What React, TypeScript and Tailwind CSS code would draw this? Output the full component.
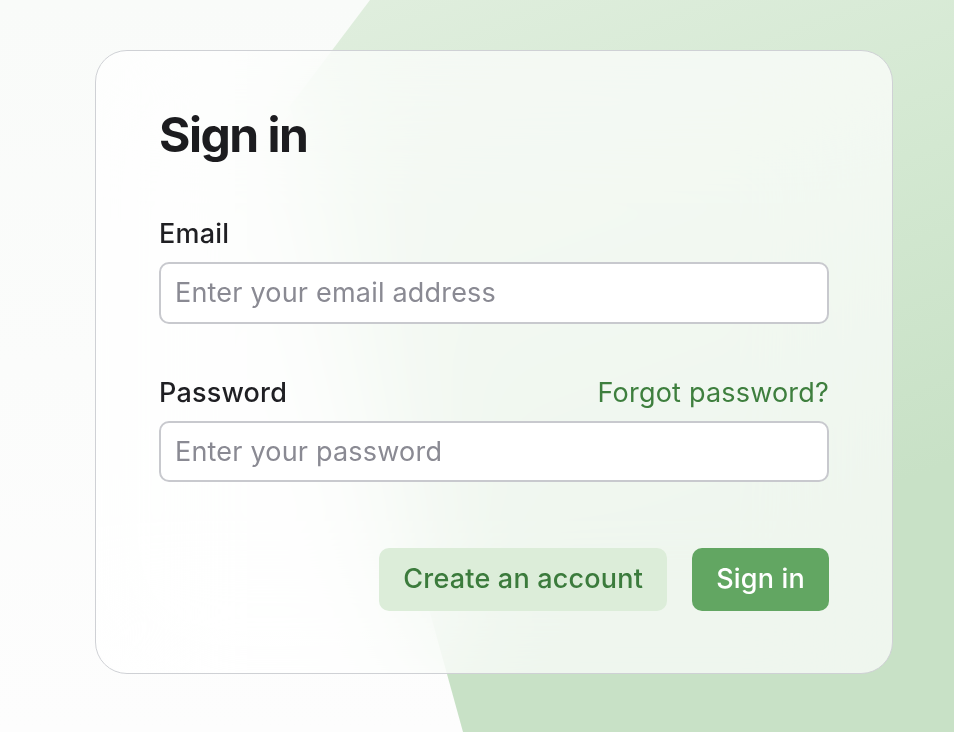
import React from 'react';

export default function App() {
  return (
    <div className="relative w-[954px] h-[732px] overflow-hidden bg-[linear-gradient(180deg,#f9fbf9,#fdfdfd)] font-['Inter',sans-serif]">
      {/* green backdrop shape */}
      <div className="absolute inset-0 bg-[linear-gradient(160deg,#e4f0e2_0%,#d3e8d1_45%,#c8e1c6_75%)] [clip-path:polygon(370px_0,100%_0,100%_100%,463px_100%,290px_106px)]" />

      <div className="relative pt-[50px] pl-[95px]">
        <div className="w-[798px] h-[624px] rounded-[32px] border border-[#cfd1d5] bg-white/70 backdrop-blur-3xl pt-[60px] pb-[62px] px-[63px] flex flex-col">
          <h1 className="text-[48px] leading-[48px] font-bold tracking-[-1.5px] text-[#1c1c1f]">Sign in</h1>

          <label className="mt-[59px] text-[27px] leading-[32px] font-medium tracking-[0.2px] text-[#1f1f23]">Email</label>
          <input
            type="email"
            placeholder="Enter your email address"
            className="mt-[12px] h-[62px] w-full rounded-[10px] border-2 border-[#c8c9ce] bg-white px-[14px] text-[27px] tracking-[0.2px] text-[#1f1f23] placeholder:text-[#8a8a93] outline-none"
          />

          <div className="mt-[53px] flex items-center justify-between">
            <label className="text-[27px] leading-[32px] font-medium tracking-[0.2px] text-[#1f1f23]">Password</label>
            <a className="text-[27px] leading-[32px] tracking-[0.2px] text-[#3e7f3e]">Forgot password?</a>
          </div>
          <input
            type="password"
            placeholder="Enter your password"
            className="mt-[12px] h-[62px] w-full rounded-[10px] border-2 border-[#c8c9ce] bg-white px-[14px] text-[27px] tracking-[0.2px] text-[#1f1f23] placeholder:text-[#8a8a93] outline-none"
          />

          <div className="mt-[66px] flex justify-end gap-[25px]">
            <button className="h-[63px] px-[24px] rounded-[10px] bg-[#dcedd9] text-[27px] font-medium tracking-[0.2px] text-[#3b7b3c]">
              Create an account
            </button>
            <button className="h-[63px] px-[24px] rounded-[10px] bg-[#62a662] text-[27px] font-medium tracking-[0.2px] text-white">
              Sign in
            </button>
          </div>
        </div>
      </div>
    </div>
  );
}
